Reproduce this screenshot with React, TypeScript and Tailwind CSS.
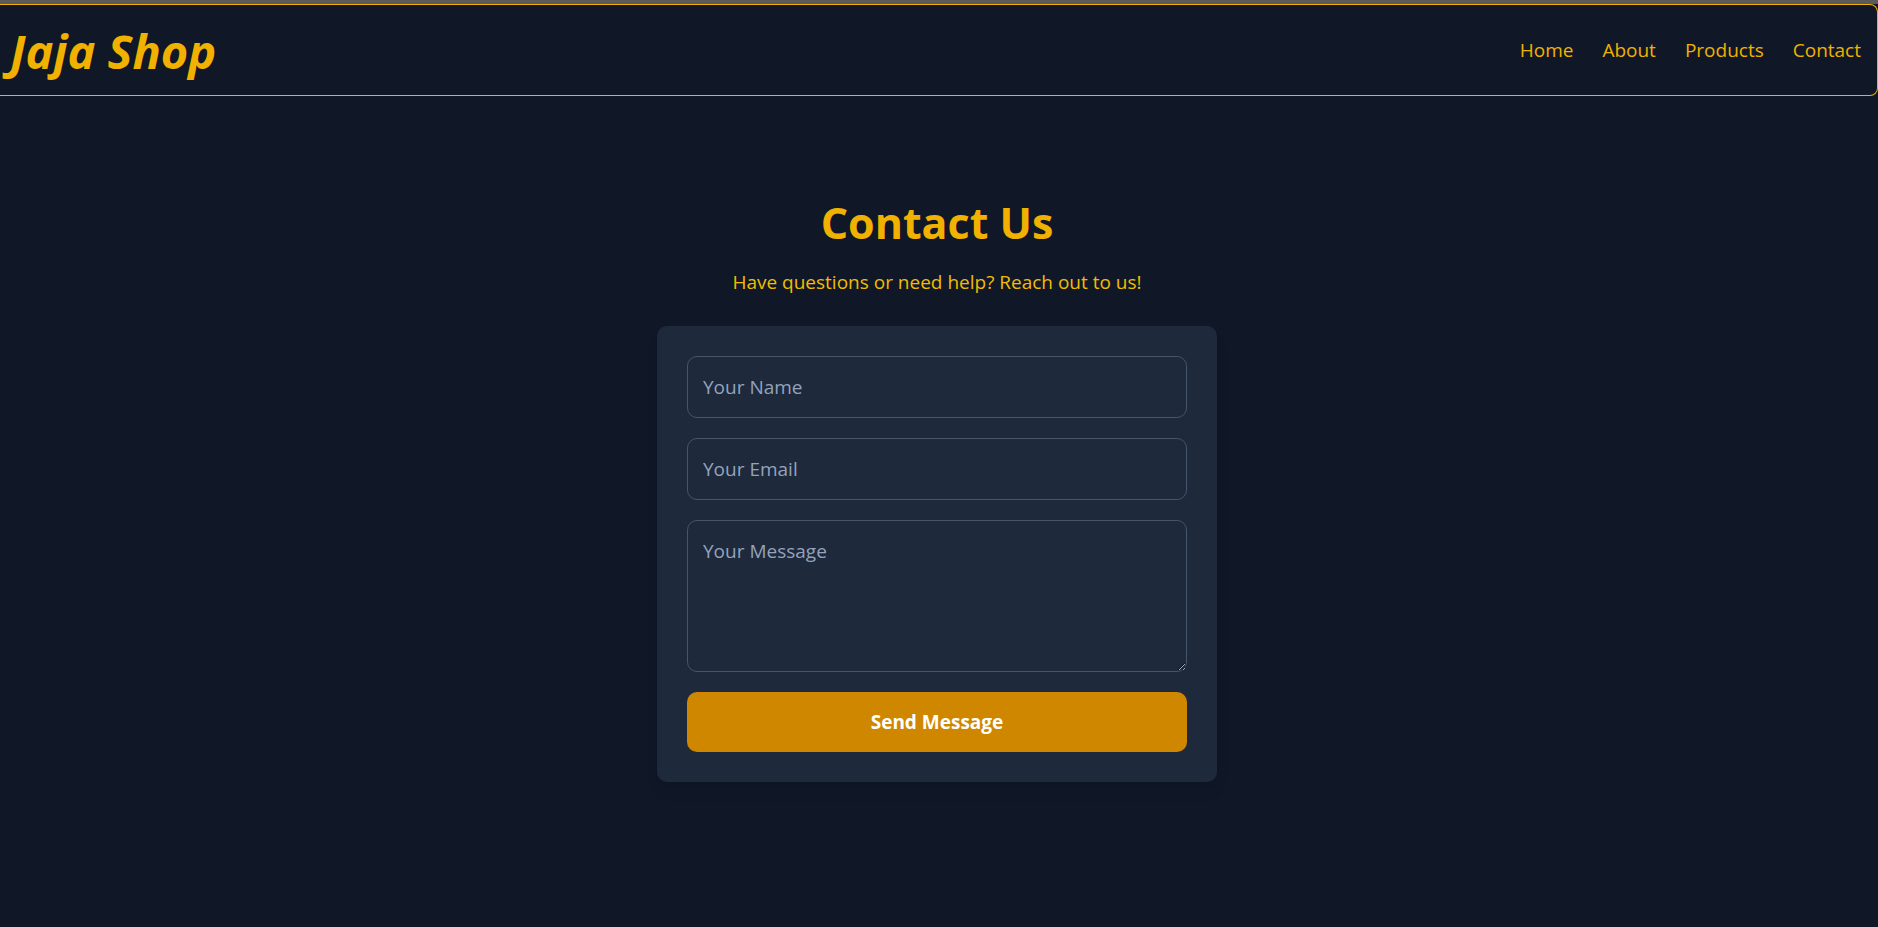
import React, { useState } from "react";

const font = { fontFamily: '"Open Sans", "Noto Sans", sans-serif' };

const navLinks = ["Home", "About", "Products", "Contact"];

const Header: React.FC = () => (
  <header className="h-[92px] flex items-center justify-between border-y border-r border-[#f0b100] rounded-r-lg pl-[10px] pr-[16px]">
    <h1 className="text-[47px] font-bold italic text-[#f0b100] leading-none pt-[3px]">Jaja Shop</h1>
    <nav className="flex items-center gap-[29px]">
      {navLinks.map((link) => (
        <a key={link} href="#" className="text-[19px] text-[#f0b100] leading-[28px]">
          {link}
        </a>
      ))}
    </nav>
  </header>
);

const ContactForm: React.FC = () => {
  const [name, setName] = useState("");
  const [email, setEmail] = useState("");
  const [message, setMessage] = useState("");

  const fieldClass =
    "w-full px-[15px] py-[16px] text-[19px] leading-[28px] bg-[#1e293b] text-white placeholder-[#94a3bb] border border-[#45556c] rounded-[10px] outline-none";

  return (
    <form
      onSubmit={(e) => e.preventDefault()}
      className="w-[560px] mt-[30px] p-[30px] bg-[#1e293b] rounded-[10px] shadow-lg flex flex-col gap-[20px]"
    >
      <input
        type="text"
        value={name}
        onChange={(e) => setName(e.target.value)}
        placeholder="Your Name"
        className={fieldClass}
      />
      <input
        type="email"
        value={email}
        onChange={(e) => setEmail(e.target.value)}
        placeholder="Your Email"
        className={fieldClass}
      />
      <textarea
        value={message}
        onChange={(e) => setMessage(e.target.value)}
        placeholder="Your Message"
        className={`${fieldClass} h-[152px] block`}
      />
      <button
        type="submit"
        className="w-full h-[60px] bg-[#d08700] text-white text-[19px] font-bold rounded-[10px]"
      >
        Send Message
      </button>
    </form>
  );
};

const App: React.FC = () => {
  return (
    <div className="min-h-[927px] bg-[#101828]" style={font}>
      <div className="h-[4px] bg-[#5b5b5b]" />
      <Header />
      <main className="flex flex-col items-center pt-[101px] pr-[4px] pb-[40px]">
        <h2 className="text-[43px] font-bold text-[#f0b100] leading-[52px]">Contact Us</h2>
        <p className="mt-[19px] text-[19px] text-[#f2bc00] leading-[28px]">
          Have questions or need help? Reach out to us!
        </p>
        <ContactForm />
      </main>
    </div>
  );
};

export default App;
